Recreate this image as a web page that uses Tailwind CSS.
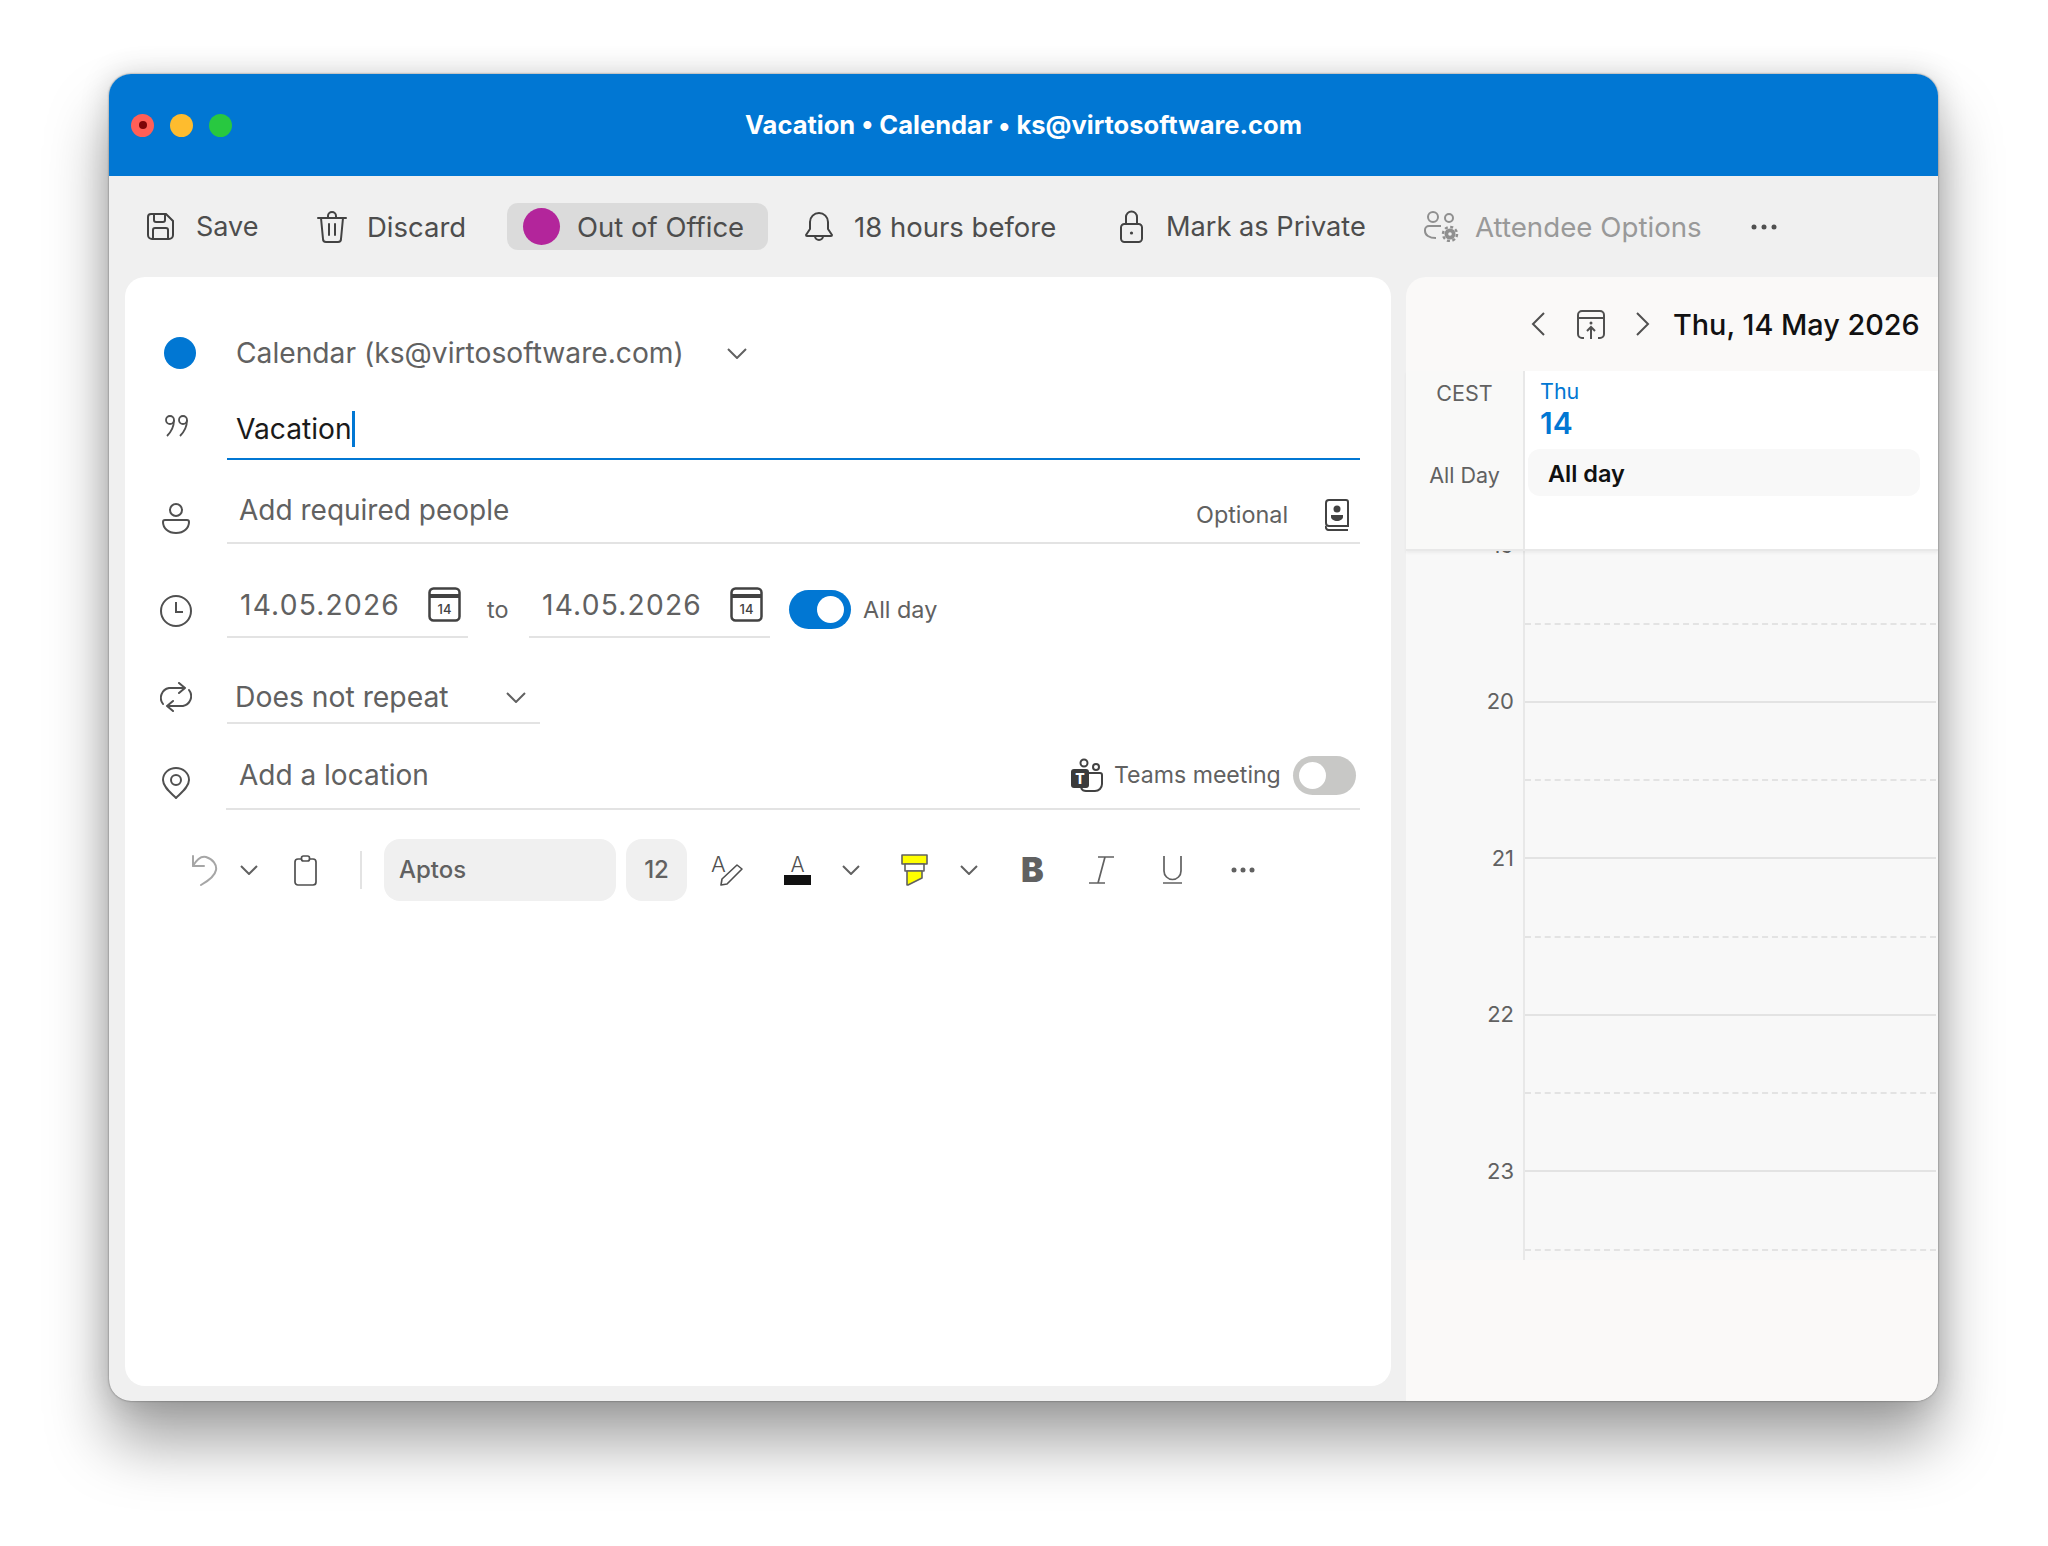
<!DOCTYPE html>
<html lang="en">
<head>
    <meta charset="UTF-8">
    <title>Vacation - Calendar</title>
    <script src="https://cdn.jsdelivr.net/npm/@tailwindcss/browser@4"></script>
</head>
<body class="bg-white h-[1546px] overflow-hidden font-['Inter',sans-serif] text-[#616161]">
    <div class="ml-[109px] mt-[74px] w-[1829px] h-[1327px] flex flex-col rounded-[22px] overflow-hidden bg-[#f0f0f0] shadow-[0_42px_62px_rgba(0,0,0,0.36),0_0_30px_rgba(0,0,0,0.16),0_0_2px_rgba(0,0,0,0.5)]">

        <!-- Title bar -->
        <header class="h-[102px] shrink-0 bg-[#0177d3] grid grid-cols-[1fr_auto_1fr] items-center">
            <div class="flex items-center gap-[16px] pl-[22px]">
                <span class="w-[23px] h-[23px] rounded-full bg-[#ff5f57] flex items-center justify-center"><span class="w-[8px] h-[8px] rounded-full bg-[#7e0508]"></span></span>
                <span class="w-[23px] h-[23px] rounded-full bg-[#febc2e]"></span>
                <span class="w-[23px] h-[23px] rounded-full bg-[#28c840]"></span>
            </div>
            <h1 class="pt-[1px] text-[25.5px] font-bold text-white whitespace-nowrap">Vacation • Calendar • ks@virtosoftware.com</h1>
            <div></div>
        </header>

        <!-- Main toolbar -->
        <nav class="h-[101px] shrink-0 flex items-center text-[27.5px] text-[#4d4d4d] whitespace-nowrap">
            <svg class="ml-[38px] w-[27px] h-[27px]" viewBox="0 0 27 27" fill="none" stroke="#424242" stroke-width="2"><path d="M4 1h15l7 7v14a4 4 0 0 1-4 4H5a4 4 0 0 1-4-4V4a3 3 0 0 1 3-3z"/><path d="M7 1v6a2 2 0 0 0 2 2h7a2 2 0 0 0 2-2V1M6 26V17a2 2 0 0 1 2-2h11a2 2 0 0 1 2 2v9"/></svg>
            <span class="ml-[22px] w-[61px] pt-[2px] text-[27px]">Save</span>
            <svg class="ml-[60px] w-[30px] h-[32px]" viewBox="0 0 30 32" fill="none" stroke="#424242" stroke-width="2" stroke-linecap="round"><path d="M1 7h28M11 7V5a4 4 0 0 1 8 0v2M4 7l2 21a3 3 0 0 0 3 3h12a3 3 0 0 0 3-3l2-21M12 13v11M18 13v11"/></svg>
            <span class="ml-[20px] w-[98px] pt-[2px]">Discard</span>
            <div class="ml-[42px] w-[261px] h-[47px] rounded-[11px] bg-[#dbdbdb] flex items-center pl-[16px]">
                <span class="w-[37px] h-[37px] rounded-full bg-[#b3259b]"></span>
                <span class="ml-[17px] pt-[2px]">Out of Office</span>
            </div>
            <svg class="ml-[37px] w-[28px] h-[30px]" viewBox="0 0 28 30" fill="none" stroke="#424242" stroke-width="2" stroke-linejoin="round"><path d="M14 1a9 9 0 0 0-9 9v7l-4 6a1 1 0 0 0 1 1h24a1 1 0 0 0 1-1l-4-6v-7a9 9 0 0 0-9-9z"/><path d="M10 24a4 4 0 0 0 8 0"/></svg>
            <span class="ml-[21px] w-[201px] pt-[2px]">18 hours before</span>
            <svg class="ml-[65px] w-[23px] h-[33px]" viewBox="0 0 23 33" fill="none" stroke="#424242" stroke-width="2"><path d="M6 14V7a5.500 5.500 0 0 1 11 0v7"/><rect x="1" y="14" width="21" height="18" rx="3.500"/><circle cx="11.500" cy="23" r="1.600" fill="#424242" stroke="none"/></svg>
            <span class="ml-[23px] w-[198px] pt-[2px] text-[27.2px]">Mark as Private</span>
            <svg class="ml-[60px] w-[35px] h-[31px]" viewBox="0 0 35 31" fill="none" stroke="#8f8f8f" stroke-width="2"><circle cx="9" cy="6" r="5"/><circle cx="25" cy="7" r="4"/><path d="M17 15H5a4 4 0 0 0-4 4v1c0 4 4 7 11 7"/><circle cx="26" cy="23" r="5.500" fill="#8f8f8f" stroke="none"/><circle cx="26" cy="23" r="7" fill="none" stroke-dasharray="3 2.500" stroke-width="2.500"/><circle cx="26" cy="23" r="1.800" fill="#f0f0f0" stroke="none"/></svg>
            <span class="ml-[16px] w-[226px] pt-[2px] text-[27.7px] text-[#999999]">Attendee Options</span>
            <svg class="ml-[50px] w-[26px] h-[6px]" viewBox="0 0 26 6" fill="#505050"><circle cx="3" cy="3" r="2.500"/><circle cx="13" cy="3" r="2.500"/><circle cx="23" cy="3" r="2.500"/></svg>
        </nav>

        <div class="flex-1 flex min-h-0">
            <!-- Event form -->
            <main class="ml-[16px] mb-[15px] w-[1266px] bg-white rounded-[20px] pt-[33px] text-[28.2px]">
                <!-- Calendar -->
                <div class="h-[86px] flex items-center">
                    <div class="w-[102px] flex justify-center"><span class="ml-[8px] w-[32px] h-[32px] rounded-full bg-[#0177d3]"></span></div>
                    <span class="ml-[9px] w-[444px] whitespace-nowrap">Calendar (ks@virtosoftware.com)</span>
                    <svg class="ml-[47px] w-[20px] h-[11px]" viewBox="0 0 20 11" fill="none" stroke="#616161" stroke-width="2"><path d="M1 1l9 9 9-9"/></svg>
                </div>

                <!-- Title -->
                <div class="h-[64px] flex pr-[31px]">
                    <div class="w-[102px] flex items-center justify-center">
                        <svg class="mt-[-6px] w-[25px] h-[23px]" viewBox="0 0 25 23" fill="none" stroke="#505050" stroke-width="1.800"><circle cx="6" cy="6" r="4"/><path d="M10 6c0 7-3 12-7 16"/><circle cx="19" cy="6" r="4"/><path d="M23 6c0 7-3 12-7 16"/></svg>
                    </div>
                    <div class="flex-1 flex items-center border-b-2 border-[#0177d3] pt-[4px] pl-[9px] text-[#1a1a1a]">
                        <span>Vacation</span><span class="w-[3px] h-[36px] bg-[#0177d3]"></span>
                    </div>
                </div>

                <!-- People -->
                <div class="h-[84px] flex pr-[31px]">
                    <div class="w-[102px] flex items-center justify-center pt-[32px]">
                        <svg class="w-[28px] h-[31px]" viewBox="0 0 28 31" fill="none" stroke="#505050" stroke-width="2"><circle cx="14" cy="7" r="6"/><path d="M3 17h22a2 2 0 0 1 2 2c0 6-5 11-13 11S1 25 1 19a2 2 0 0 1 2-2z"/></svg>
                    </div>
                    <div class="flex-1 flex items-center border-b-2 border-[#e3e3e3] pl-[12px] pt-[18px]">
                        <span class="text-[28px]">Add required people</span>
                        <span class="ml-auto pt-[10px] text-[23.4px] w-[92px] whitespace-nowrap">Optional</span>
                        <svg class="ml-[37px] mr-[11px] w-[24px] h-[32px] mt-[10px]" viewBox="0 0 24 32" fill="none" stroke="#424242" stroke-width="2"><path d="M4 1h17a2 2 0 0 1 2 2v24H4a3 3 0 0 1-3-3V4a3 3 0 0 1 3-3z"/><path d="M1 27a3 3 0 0 0 3 4h19"/><circle cx="12" cy="10" r="3.500" fill="#424242" stroke="none"/><path d="M6 16h12v2c0 2-3 4-6 4s-6-2-6-4z" fill="#424242" stroke="none"/></svg>
                    </div>
                </div>

                <!-- Dates -->
                <div class="h-[94px] flex">
                    <div class="w-[102px] flex items-center justify-center pt-[40px]">
                        <svg class="w-[32px] h-[32px]" viewBox="0 0 32 32" fill="none" stroke="#505050" stroke-width="2"><circle cx="16" cy="16" r="15"/><path d="M16 7v10h7"/></svg>
                    </div>
                    <div class="w-[241px] flex items-center border-b-2 border-[#e3e3e3] pl-[13px] pt-[30px]">
                        <span class="w-[159px] whitespace-nowrap tracking-[1.2px]">14.05.2026</span>
                        <svg class="ml-[29px] -mt-[2px] w-[33px] h-[35px]" viewBox="0 0 33 35" fill="none" stroke="#424242" stroke-width="2.500"><rect x="1.500" y="1.500" width="30" height="32" rx="4"/><path d="M1.500 9h30" stroke-width="4"/><text x="16.500" y="27" text-anchor="middle" font-size="13" font-weight="500" fill="#424242" stroke="none" font-family="Inter">14</text></svg>
                    </div>
                    <span class="ml-[19px] w-[22px] pt-[46px] text-[23.4px] leading-[40px]">to</span>
                    <div class="ml-[20px] w-[241px] flex items-center border-b-2 border-[#e3e3e3] pl-[13px] pt-[30px]">
                        <span class="w-[159px] whitespace-nowrap tracking-[1.2px]">14.05.2026</span>
                        <svg class="ml-[29px] -mt-[2px] w-[33px] h-[35px]" viewBox="0 0 33 35" fill="none" stroke="#424242" stroke-width="2.500"><rect x="1.500" y="1.500" width="30" height="32" rx="4"/><path d="M1.500 9h30" stroke-width="4"/><text x="16.500" y="27" text-anchor="middle" font-size="13" font-weight="500" fill="#424242" stroke="none" font-family="Inter">14</text></svg>
                    </div>
                    <div class="ml-[19px] mt-[46px] w-[62px] h-[39px] rounded-full bg-[#0177d3] flex items-center justify-end pr-[7px]"><span class="w-[27px] h-[27px] rounded-full bg-white"></span></div>
                    <span class="ml-[12px] mt-[46px] text-[23.4px] leading-[40px] whitespace-nowrap">All day</span>
                </div>

                <!-- Repeat -->
                <div class="h-[86px] flex">
                    <div class="w-[102px] flex items-center justify-center pt-[32px]">
                        <svg class="w-[32px] h-[30px]" viewBox="0 0 32 30" fill="none" stroke="#505050" stroke-width="2" stroke-linecap="round" stroke-linejoin="round"><path d="M3 22A10 10 0 0 1 9 6h16M19 1l6 5-6 5"/><path d="M29 8a10 10 0 0 1-6 16H7M13 19l-6 5 6 5"/></svg>
                    </div>
                    <div class="w-[313px] flex items-center border-b-2 border-[#e3e3e3] pl-[8px] pt-[34px]">
                        <span class="w-[212px] whitespace-nowrap text-[28.3px]">Does not repeat</span>
                        <svg class="ml-[59px] w-[20px] h-[11px]" viewBox="0 0 20 11" fill="none" stroke="#616161" stroke-width="2"><path d="M1 1l9 9 9-9"/></svg>
                    </div>
                </div>

                <!-- Location -->
                <div class="h-[86px] flex pr-[31px]">
                    <div class="w-[102px] flex items-center justify-center pt-[32px]">
                        <svg class="w-[28px] h-[32px]" viewBox="0 0 28 32" fill="none" stroke="#505050" stroke-width="2" stroke-linejoin="round"><path d="M14 1C7 1 1 6 1 13c0 7 8 13 13 18 5-5 13-11 13-18C27 6 21 1 14 1z"/><circle cx="14" cy="13" r="5"/></svg>
                    </div>
                    <div class="flex-1 flex items-center border-b-2 border-[#e3e3e3] pl-[13px] pt-[18px]">
                        <span class="w-[189px] whitespace-nowrap text-[28px]">Add a location</span>
                        <svg class="ml-[643px] w-[32px] h-[35px]" viewBox="0 0 32 35" fill="none" stroke="#424242" stroke-width="2"><circle cx="13" cy="5" r="3.500"/><circle cx="25" cy="9" r="3"/><path d="M15 15h14a2 2 0 0 1 2 2v9a7 7 0 0 1-7 7H16a6 6 0 0 1-6-3"/><rect x="0" y="11" width="18" height="19" rx="3" fill="#3b3b3b" stroke="none"/><text x="9" y="26" text-anchor="middle" font-size="14" font-weight="800" fill="#ffffff" stroke="none" font-family="Inter">T</text></svg>
                        <span class="ml-[11px] w-[166px] text-[23.1px] whitespace-nowrap">Teams meeting</span>
                        <div class="ml-[13px] mr-[4px] w-[63px] h-[39px] rounded-full bg-[#c8c8c6] flex items-center pl-[6px]"><span class="w-[27px] h-[27px] rounded-full bg-white"></span></div>
                    </div>
                </div>

                <!-- Formatting bar -->
                <div class="mt-[29px] h-[62px] flex items-center">
                    <svg class="ml-[67px] w-[26px] h-[31px]" viewBox="0 0 26 31" fill="none" stroke="#a6a6a6" stroke-width="2" stroke-linecap="round" stroke-linejoin="round"><path d="M1 1v10h11"/><path d="M1 11C5 4 10 1 14 2c7 2 11 8 10 13-1 6-8 11-15 15"/></svg>
                    <svg class="ml-[22px] w-[18px] h-[10px]" viewBox="0 0 18 10" fill="none" stroke="#616161" stroke-width="2"><path d="M1 1l8 8 8-8"/></svg>
                    <svg class="ml-[36px] w-[23px] h-[31px]" viewBox="0 0 23 31" fill="none" stroke="#505050" stroke-width="1.700"><rect x="1" y="4" width="21" height="26" rx="3"/><rect x="7.500" y="1" width="8" height="5" rx="2" fill="#ffffff"/></svg>
                    <span class="ml-[43px] w-[2px] h-[38px] bg-[#e3e3e3]"></span>
                    <div class="ml-[22px] w-[232px] h-[62px] rounded-[16px] bg-[#f0f0f0] flex items-center pl-[15px] text-[24px] font-medium">Aptos</div>
                    <div class="ml-[10px] w-[61px] h-[62px] rounded-[16px] bg-[#f0f0f0] flex items-center justify-center text-[24px] font-medium">12</div>
                    <svg class="ml-[24px] w-[32px] h-[32px] overflow-visible" viewBox="0 0 32 32" fill="none" stroke="#505050" stroke-width="1.600"><text x="0" y="18" font-size="22" font-weight="300" fill="#505050" stroke="none" font-family="Inter">A</text><path d="M26 11l5 4L16 30l-6 1 1-6z" stroke-linejoin="round"/></svg>
                    <svg class="ml-[41px] w-[27px] h-[31px] overflow-visible" viewBox="0 0 27 31"><text x="13.500" y="17" text-anchor="middle" font-size="21" font-weight="300" fill="#505050" font-family="Inter">A</text><rect x="0" y="20" width="27" height="10" fill="#111111"/></svg>
                    <svg class="ml-[31px] w-[18px] h-[10px]" viewBox="0 0 18 10" fill="none" stroke="#616161" stroke-width="2"><path d="M1 1l8 8 8-8"/></svg>
                    <svg class="ml-[41px] w-[27px] h-[32px]" viewBox="0 0 27 32" stroke="#616161" stroke-width="1.600" stroke-linejoin="round"><path d="M1 1h25v9H1z" fill="#ffff00"/><path d="M4 10h19v7H4z" fill="#ffffff"/><path d="M6 17h15v7L7 31H6z" fill="#ffff00"/></svg>
                    <svg class="ml-[32px] w-[18px] h-[10px]" viewBox="0 0 18 10" fill="none" stroke="#616161" stroke-width="2"><path d="M1 1l8 8 8-8"/></svg>
                    <span class="ml-[43px] w-[21px] text-[34px] leading-none font-black">B</span>
                    <svg class="ml-[47px] w-[25px] h-[28px]" viewBox="0 0 25 28" fill="none" stroke="#616161" stroke-width="1.700"><path d="M9 1h16M16 1L9 27M0 27h16"/></svg>
                    <svg class="ml-[49px] w-[19px] h-[28px]" viewBox="0 0 19 28" fill="none" stroke="#616161" stroke-width="1.700"><path d="M1 0v15a8.500 8.500 0 0 0 17 0V0M0 27h19"/></svg>
                    <svg class="ml-[49px] w-[24px] h-[6px]" viewBox="0 0 24 6" fill="#616161"><circle cx="3" cy="3" r="2.500"/><circle cx="12" cy="3" r="2.500"/><circle cx="21" cy="3" r="2.500"/></svg>
                </div>
            </main>

            <!-- Day preview -->
            <aside class="ml-[15px] w-[532px] bg-[#faf9f8] rounded-tl-[20px] flex flex-col">
                <div class="h-[94px] shrink-0 flex items-center pl-[125px]">
                    <svg class="w-[14px] h-[24px]" viewBox="0 0 14 24" fill="none" stroke="#505050" stroke-width="2"><path d="M13 1L2 12l11 11"/></svg>
                    <svg class="ml-[32px] w-[28px] h-[29px]" viewBox="0 0 28 29" fill="none" stroke="#505050" stroke-width="2"><path d="M7 28H5a4 4 0 0 1-4-4V5a4 4 0 0 1 4-4h18a4 4 0 0 1 4 4v19a4 4 0 0 1-4 4h-2"/><path d="M1 8h26M14 29V17M10 21l4-4 4 4"/><circle cx="14" cy="13" r="1.500" fill="#505050" stroke="none"/></svg>
                    <svg class="ml-[31px] w-[14px] h-[24px]" viewBox="0 0 14 24" fill="none" stroke="#505050" stroke-width="2"><path d="M1 1l11 11L1 23"/></svg>
                    <span class="ml-[23px] w-[245px] pt-[2px] whitespace-nowrap text-[28.8px] font-medium text-[#111111]">Thu, 14 May 2026</span>
                </div>

                <!-- All day strip -->
                <div class="h-[180px] shrink-0 flex border-b-2 border-[#e8e8e8] shadow-[0_2px_3px_rgba(0,0,0,0.05)] z-10">
                    <div class="w-[117px] text-center text-[21.5px] bg-[#f9f9f8]">
                        <div class="leading-[44px]">CEST</div>
                        <div class="mt-[38px] leading-[44px] whitespace-nowrap">All Day</div>
                    </div>
                    <div class="w-[413px] ml-[2px] bg-white relative before:absolute before:left-[-2px] before:top-0 before:bottom-0 before:w-[2px] before:bg-[#e8e8e8]">
                        <div class="pt-[2px] pl-[15px] text-[21.5px] leading-[36px] text-[#0177d3]">Thu</div>
                        <div class="pl-[15px] text-[30px] leading-[28px] font-semibold text-[#0177d3]">14</div>
                        <div class="mt-[12px] ml-[3px] w-[392px] h-[47px] rounded-[12px] bg-[#f8f8f8] flex items-center pl-[20px] pt-[2px] text-[23.5px] font-semibold text-[#111111]">All day</div>
                    </div>
                </div>

                <!-- Hours -->
                <div class="h-[709px] shrink-0 flex overflow-hidden bg-[#f8f8f8]">
                    <div class="w-[117px] shrink-0 text-right pr-[9px] text-[22px] mt-[-84px]">
                        <div class="h-[156.500px] flex items-center justify-end">19</div>
                        <div class="h-[156.500px] flex items-center justify-end">20</div>
                        <div class="h-[156.500px] flex items-center justify-end">21</div>
                        <div class="h-[156.500px] flex items-center justify-end">22</div>
                        <div class="h-[156.500px] flex items-center justify-end">23</div>
                    </div>
                    <div class="w-[413px] border-l-2 border-[#e8e8e8]">
                        <div class="h-[73.500px] border-b-2 border-dashed border-[#e3e3e3]"></div>
                        <div class="h-[78.250px] border-b-2 border-[#e3e3e3]"></div>
                        <div class="h-[78.250px] border-b-2 border-dashed border-[#e3e3e3]"></div>
                        <div class="h-[78.250px] border-b-2 border-[#e3e3e3]"></div>
                        <div class="h-[78.250px] border-b-2 border-dashed border-[#e3e3e3]"></div>
                        <div class="h-[78.250px] border-b-2 border-[#e3e3e3]"></div>
                        <div class="h-[78.250px] border-b-2 border-dashed border-[#e3e3e3]"></div>
                        <div class="h-[78.250px] border-b-2 border-[#e3e3e3]"></div>
                        <div class="h-[78.250px] border-b-2 border-dashed border-[#e3e3e3]"></div>
                    </div>
                </div>
            </aside>
        </div>
    </div>
</body>
</html>
